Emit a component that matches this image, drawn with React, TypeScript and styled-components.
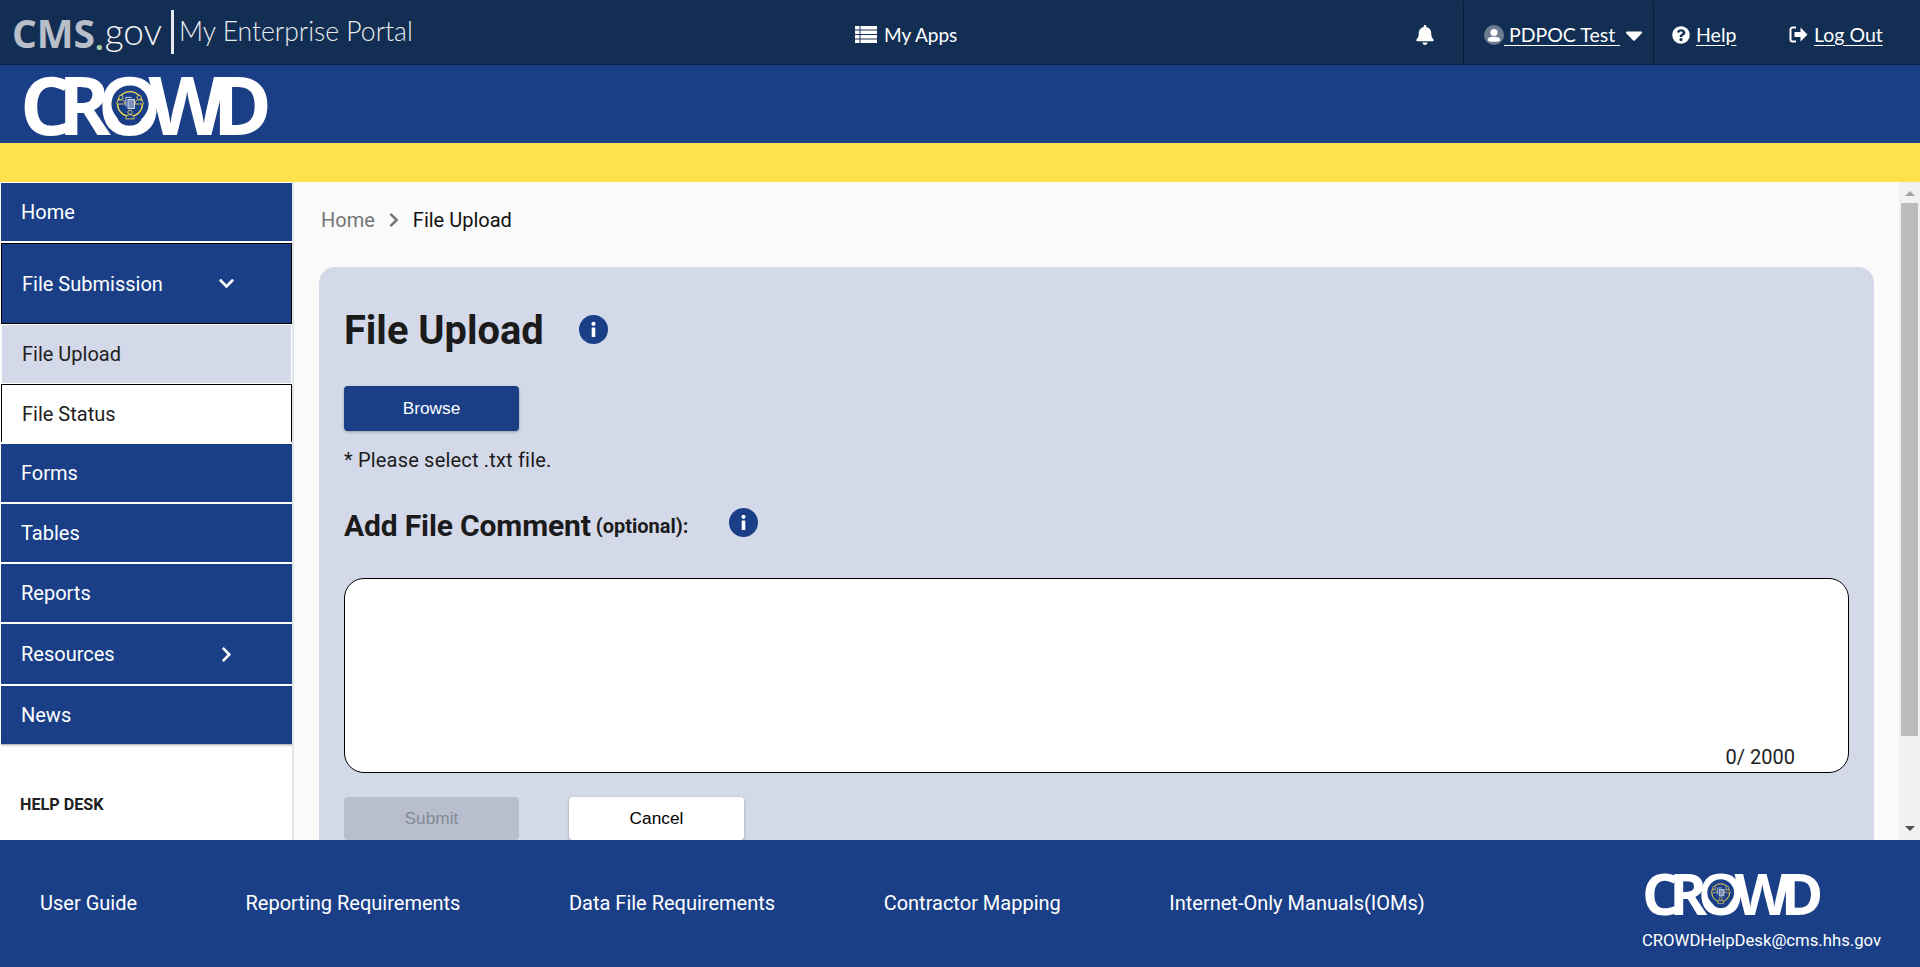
import React from "react";
import styled, { createGlobalStyle } from "styled-components";
import { FaBell, FaCaretDown, FaQuestionCircle, FaChevronDown, FaChevronRight } from "react-icons/fa";

const Global = createGlobalStyle`
  html, body { margin: 0; padding: 0; height: 100%; overflow: hidden; }
  body { font-family: Roboto, "Liberation Sans", sans-serif; background: #fff; }
  * { box-sizing: border-box; }
`;

const navy = "#1a3f87";

const Page = styled.div`
  height: 967px;
  display: flex;
  flex-direction: column;
`;

const TopBar = styled.header`
  height: 65px;
  flex: none;
  background: #122e53;
  border-bottom: 1px solid #0d2340;
  display: flex;
  align-items: center;
  color: #fff;
`;

const Brand = styled.div`
  width: 855px;
  flex: none;
  display: flex;
  align-items: center;
  padding-left: 12px;
  color: #fff;
`;

const CmsBold = styled.span`
  font: 700 39px/1 "Open Sans", sans-serif;
  color: #b9bfc9;
`;

const CmsDot = styled.span`
  font: 700 30px/1 "Open Sans", sans-serif;
  color: #a9cf9f;
  align-self: flex-end;
`;

const CmsGov = styled.span`
  font: 300 37px/1 Lato, sans-serif;
  color: #f1f3f5;
  margin-left: 1px;
  position: relative;
  top: -2px;
`;

const BrandRule = styled.span`
  width: 3px;
  height: 44px;
  background: #e5e8ec;
  margin: 0 5px 0 9px;
`;

const BrandName = styled.span`
  font: 300 26.5px/1 Lato, sans-serif;
  color: #e9ecef;
  position: relative;
  top: -1px;
`;

const Apps = styled.a`
  display: flex;
  align-items: center;
  gap: 7px;
  padding-top: 4px;
  font: 400 19px/1 Lato, sans-serif;
  color: #fff;
`;

const TopActions = styled.nav`
  margin-left: auto;
  display: flex;
  align-items: stretch;
  height: 63px;
  font: 400 19.5px/1 Lato, sans-serif;
`;

const Cell = styled.div<{ $w: number; $divider?: boolean; $pl?: number }>`
  width: ${(p) => p.$w}px;
  display: flex;
  align-items: center;
  padding: 5px 0 0 ${(p) => p.$pl ?? 0}px;
  gap: 6px;
  border-right: ${(p) => (p.$divider ? "1px solid #0a1c34" : "0")};
`;

const TopLink = styled.a`
  color: #fff;
  text-decoration: underline;
  text-underline-offset: 3px;
  white-space: pre;
`;

const UserGlyph = styled.svg`
  flex: none;
  margin-right: -6px;
`;

const UserCaret = styled(FaCaretDown)`
  flex: none;
  margin-left: -6px;
`;

const Banner = styled.div`
  height: 78px;
  flex: none;
  background: ${navy};
  display: flex;
  align-items: center;
  padding-left: 20px;
`;

const LogoWrap = styled.div<{ $scale: number }>`
  position: relative;
  width: ${(p) => 246 * p.$scale}px;
  height: ${(p) => 60 * p.$scale}px;
  display: flex;
  align-items: center;
  font: 700 ${(p) => 80 * p.$scale}px/1 "Open Sans", sans-serif;
  letter-spacing: ${(p) => -13 * p.$scale}px;
  color: #fff;
  white-space: nowrap;
`;

const LogoEmblem = styled.svg<{ $scale: number }>`
  position: absolute;
  left: ${(p) => 91 * p.$scale}px;
  top: ${(p) => 11 * p.$scale}px;
  width: ${(p) => 38 * p.$scale}px;
  height: ${(p) => 38 * p.$scale}px;
`;

const Stripe = styled.div`
  height: 39px;
  flex: none;
  background: #fee14c;
`;

const Body = styled.div`
  flex: 1;
  min-height: 0;
  display: flex;
`;

const Side = styled.aside`
  width: 294px;
  flex: none;
  background: #fff;
  border-right: 2px solid #e2e5ea;
  padding: 1px 0 0 1px;
  overflow: hidden;
`;

const NavItem = styled.a<{ $h?: number; $mt?: number }>`
  display: flex;
  align-items: center;
  justify-content: space-between;
  width: 291px;
  height: ${(p) => p.$h ?? 58}px;
  margin-top: ${(p) => p.$mt ?? 2}px;
  padding: 0 57px 0 20px;
  background: ${navy};
  color: #fff;
  font: 400 20px/1 Roboto, sans-serif;
`;

const NavOpen = styled(NavItem)`
  border: 1px solid #000;
  padding-left: 20px;
  padding-right: 56px;
`;

const SubActive = styled.a`
  display: flex;
  align-items: center;
  width: 289px;
  height: 58px;
  margin: 1px 0 0 1px;
  padding-left: 20px;
  background: #d3d9e8;
  color: #212121;
  font: 400 20px/1 Roboto, sans-serif;
`;

const SubFocus = styled.a`
  display: flex;
  align-items: center;
  width: 291px;
  height: 58px;
  margin-top: 1px;
  padding-left: 20px;
  background: #fff;
  color: #212121;
  border: 1px solid #000;
  border-bottom: 0;
  font: 400 20px/1 Roboto, sans-serif;
`;

const NavEnd = styled.div`
  width: 291px;
  height: 1px;
  background: #bbb;
  box-shadow: 0 1px 2px rgba(0, 0, 0, 0.25);
`;

const HelpTitle = styled.div`
  margin: 50px 0 0 19px;
  font: 700 16.2px/1.2 Roboto, sans-serif;
  color: #212121;
`;

const Main = styled.main`
  flex: 1;
  min-width: 0;
  background: #fafafa;
  overflow: hidden;
  padding: 0 25px;
`;

const Rail = styled.div`
  width: 21px;
  flex: none;
  background: #f1f1f1;
  display: flex;
  flex-direction: column;
  align-items: center;
`;

const RailUp = styled.svg`
  margin: 9px 0 7px;
  flex: none;
`;

const RailThumb = styled.div`
  width: 17px;
  height: 533px;
  background: #bcbcbc;
`;

const RailDown = styled.svg`
  margin: auto 0 9px;
  flex: none;
`;

const Crumbs = styled.div`
  height: 85px;
  display: flex;
  align-items: flex-start;
  padding: 26px 0 0 2px;
  font: 400 20px/1.2 Roboto, sans-serif;
  color: #111;
  gap: 13px;
`;

const CrumbHome = styled.span`
  color: #757575;
`;

const CrumbSep = styled(FaChevronRight)`
  color: #757575;
  width: 12px;
  height: 16px;
  margin-top: 4px;
`;

const Card = styled.section`
  width: 1555px;
  height: 675px;
  background: #d3d9e8;
  border-radius: 16px 16px 0 0;
  padding: 39px 25px 0 25px;
`;

const TitleRow = styled.div`
  display: flex;
  align-items: center;
  height: 50px;
`;

const Title = styled.h1`
  margin: 0;
  font: 700 39.8px/50px Roboto, sans-serif;
  color: #1b1b1b;
`;

const InfoBadge = styled.svg<{ $ml: number; $up?: number }>`
  flex: none;
  margin-left: ${(p) => p.$ml}px;
  margin-top: ${(p) => -(p.$up ?? 0)}px;
`;

const Button = styled.button<{ $kind: "primary" | "disabled" | "plain"; $h?: number }>`
  width: 175px;
  height: ${(p) => p.$h ?? 45}px;
  border: 0;
  border-radius: 4px;
  font: 400 17.3px/1 "Liberation Sans", Arial, sans-serif;
  background: ${(p) => (p.$kind === "primary" ? navy : p.$kind === "plain" ? "#fff" : "#b8becd")};
  color: ${(p) => (p.$kind === "primary" ? "#fff" : p.$kind === "plain" ? "#000" : "#858a96")};
  box-shadow: ${(p) => (p.$kind === "disabled" ? "none" : "0 1px 3px rgba(0,0,0,.3)")};
`;

const BrowseRow = styled.div`
  margin-top: 30px;
`;

const Hint = styled.p`
  margin: 17px 0 0;
  font: 400 20px/1.2 Roboto, sans-serif;
  letter-spacing: 0.00938em;
  color: #1b1b1b;
`;

const CommentRow = styled.div`
  display: flex;
  align-items: center;
  height: 44px;
  margin-top: 32px;
`;

const CommentTitle = styled.span`
  font: 700 30px/1 Roboto, sans-serif;
  letter-spacing: -0.15px;
  color: #1b1b1b;
`;

const CommentNote = styled.span`
  font: 700 20px/1 Roboto, sans-serif;
  color: #1b1b1b;
  margin-left: 5px;
`;

const Comment = styled.div`
  margin-top: 30px;
  width: 1505px;
  height: 195px;
  background: #fff;
  border: 1px solid #000;
  border-radius: 20px;
  display: flex;
  align-items: flex-end;
  justify-content: flex-end;
  padding: 0 53px 3px 0;
  font: 400 20px/1.2 Roboto, sans-serif;
  color: #212121;
`;

const Actions = styled.div`
  display: flex;
  gap: 50px;
  margin-top: 24px;
`;

const Footer = styled.footer`
  height: 127px;
  flex: none;
  background: ${navy};
  display: flex;
  justify-content: space-between;
  padding: 0 39px 0 40px;
  color: #fff;
`;

const FootLinks = styled.div`
  display: flex;
  align-items: center;
  gap: 108.5px;
  height: 125px;
  font: 400 20px/1 Roboto, sans-serif;
`;

const FootBrand = styled.div`
  display: flex;
  flex-direction: column;
  align-items: flex-start;
  padding-top: 31px;
  gap: 17px;
  font: 400 16.7px/1.2 Roboto, sans-serif;
`;

function Logo({ scale }: { scale: number }) {
  return (
    <LogoWrap $scale={scale}>
      CROWD
      <LogoEmblem $scale={scale} viewBox="0 0 46 46">
        <circle cx="23" cy="23" r="22.5" fill="#1a3f87" />
        <circle cx="23" cy="23" r="15" fill="none" stroke="#fee14c" strokeWidth="1.6" />
        <g fill="#1a3f87" stroke="#e0c95a" strokeWidth="1.1">
          <circle cx="12" cy="15" r="2.6" />
          <path d="M7 23c0-4 2-5 5-5s5 1 5 5z" />
          <circle cx="34" cy="15" r="2.6" />
          <path d="M29 23c0-4 2-5 5-5s5 1 5 5z" />
          <circle cx="23" cy="33" r="2.6" />
          <path d="M18 41c0-4 2-5 5-5s5 1 5 5z" />
        </g>
        <g fill="none" stroke="#e8edf5" strokeWidth="1">
          <path d="M18 26V15h7" />
          <rect x="20.5" y="17.5" width="8" height="11" fill="#7f93bb" />
        </g>
      </LogoEmblem>
    </LogoWrap>
  );
}

function LogoutGlyph() {
  return (
    <svg width="19" height="17" viewBox="0 0 19 17" fill="none">
      <path d="M7 1.5H3.5a2 2 0 0 0-2 2v10a2 2 0 0 0 2 2H7" stroke="#fff" strokeWidth="2" />
      <path d="M5.5 6h6V1.5L18.5 8.5l-7 7V11h-6z" fill="#fff" />
    </svg>
  );
}

function ListGlyph() {
  return (
    <svg width="22" height="17" viewBox="0 0 22 17" fill="#fff">
      {[0, 4.5, 9, 13.5].map((y) => (
        <g key={y}>
          <rect x="0" y={y} width="4.5" height="3.5" />
          <rect x="5.5" y={y} width="16.5" height="3.5" />
        </g>
      ))}
    </svg>
  );
}

function UserCircleGlyph() {
  return (
    <UserGlyph width="20" height="20" viewBox="0 0 20 20">
      <circle cx="10" cy="10" r="10" fill="#6d7c91" />
      <circle cx="10" cy="7.5" r="3.6" fill="#fff" />
      <path d="M3.8 15.2c0-2.6 2.2-3.4 6.2-3.4s6.2.8 6.2 3.4c0 .8-2 1.6-6.2 1.6s-6.2-.8-6.2-1.6z" fill="#fff" />
    </UserGlyph>
  );
}

function Info({ ml, up }: { ml: number; up?: number }) {
  return (
    <InfoBadge $ml={ml} $up={up} width="29" height="29" viewBox="0 0 29 29">
      <circle cx="14.5" cy="14.5" r="14.5" fill="#1a3f87" />
      <circle cx="14.5" cy="8.8" r="2.1" fill="#fff" />
      <rect x="12.7" y="12.5" width="3.6" height="9.5" rx="0.6" fill="#fff" />
    </InfoBadge>
  );
}

export default function App() {
  return (
    <Page>
      <Global />
      <TopBar>
        <Brand>
          <CmsBold>CMS</CmsBold>
          <CmsDot>.</CmsDot>
          <CmsGov>gov</CmsGov>
          <BrandRule />
          <BrandName>My Enterprise Portal</BrandName>
        </Brand>
        <Apps>
          <ListGlyph />
          My Apps
        </Apps>
        <TopActions>
          <Cell $w={62} $divider $pl={13}>
            <FaBell size={20} />
          </Cell>
          <Cell $w={190} $divider $pl={20}>
            <UserCircleGlyph />
            <TopLink>{" PDPOC Test "}</TopLink>
            <UserCaret size={28} />
          </Cell>
          <Cell $w={135} $pl={18}>
            <FaQuestionCircle size={18} />
            <TopLink>Help</TopLink>
          </Cell>
          <Cell $w={131}>
            <LogoutGlyph />
            <TopLink>Log Out</TopLink>
          </Cell>
        </TopActions>
      </TopBar>
      <Banner>
        <Logo scale={1} />
      </Banner>
      <Stripe />
      <Body>
        <Side>
          <NavItem $mt={0}>Home</NavItem>
          <NavOpen $h={81}>
            File Submission
            <FaChevronDown size={17} />
          </NavOpen>
          <SubActive>File Upload</SubActive>
          <SubFocus>File Status</SubFocus>
          <NavItem>Forms</NavItem>
          <NavItem>Tables</NavItem>
          <NavItem>Reports</NavItem>
          <NavItem $h={60}>
            Resources
            <FaChevronRight size={17} />
          </NavItem>
          <NavItem>News</NavItem>
          <NavEnd />
          <HelpTitle>HELP DESK</HelpTitle>
        </Side>
        <Main>
          <Crumbs>
            <CrumbHome>Home</CrumbHome>
            <CrumbSep />
            <span>File Upload</span>
          </Crumbs>
          <Card>
            <TitleRow>
              <Title>File Upload</Title>
              <Info ml={35} up={4} />
            </TitleRow>
            <BrowseRow>
              <Button $kind="primary">Browse</Button>
            </BrowseRow>
            <Hint>* Please select .txt file.</Hint>
            <CommentRow>
              <CommentTitle>Add File Comment</CommentTitle>
              <CommentNote>(optional):</CommentNote>
              <Info ml={41} up={8} />
            </CommentRow>
            <Comment>0/ 2000</Comment>
            <Actions>
              <Button $kind="disabled" $h={43}>Submit</Button>
              <Button $kind="plain" $h={43}>Cancel</Button>
            </Actions>
          </Card>
        </Main>
        <Rail>
          <RailUp width="10" height="5" viewBox="0 0 10 5">
            <path d="M5 0l5 5H0z" fill="#a3a3a3" />
          </RailUp>
          <RailThumb />
          <RailDown width="10" height="5" viewBox="0 0 10 5">
            <path d="M0 0h10L5 5z" fill="#505050" />
          </RailDown>
        </Rail>
      </Body>
      <Footer>
        <FootLinks>
          <span>User Guide</span>
          <span>Reporting Requirements</span>
          <span>Data File Requirements</span>
          <span>Contractor Mapping</span>
          <span>Internet-Only Manuals(IOMs)</span>
        </FootLinks>
        <FootBrand>
          <Logo scale={0.72} />
          <span>CROWDHelpDesk@cms.hhs.gov</span>
        </FootBrand>
      </Footer>
    </Page>
  );
}
